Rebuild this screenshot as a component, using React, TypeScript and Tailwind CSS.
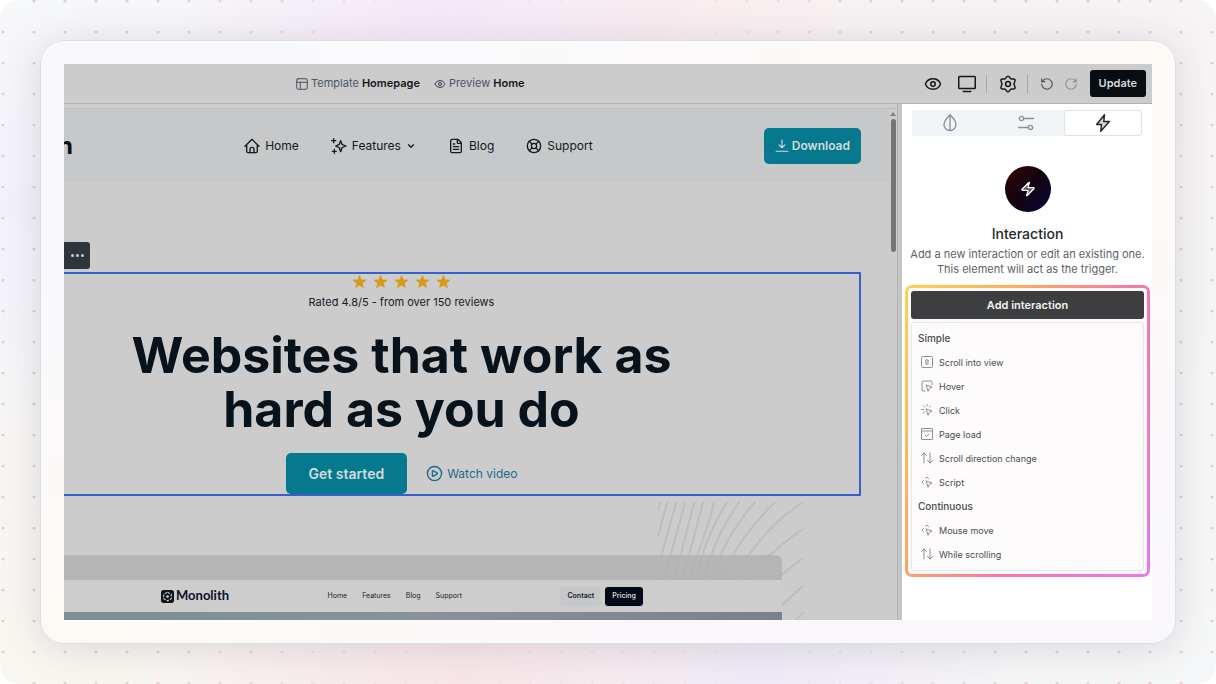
import type { ReactNode } from "react";
import { ChevronDown, CirclePlay, Eye, FileText, LifeBuoy, PanelsTopLeft, RotateCcw, RotateCw, Zap } from "lucide-react";

type IconProps = { className?: string; width?: number; children: ReactNode };

function Icon({ className = "size-4", width = 2, children }: IconProps) {
  return (
    <svg viewBox="0 0 24 24" fill="none" stroke="currentColor" strokeWidth={width} strokeLinecap="round" strokeLinejoin="round" className={className} aria-hidden="true">
      {children}
    </svg>
  );
}

const HomeIcon = () => (
  <Icon>
    <path d="M4 11v9a2 2 0 0 0 2 2h12a2 2 0 0 0 2-2v-9" />
    <path d="M1.500 12.500 12 2l10.500 10.500" />
    <path d="M9 22v-5a3 3 0 0 1 6 0v5" />
  </Icon>
);

const SparkIcon = () => (
  <Icon>
    <path d="M14.500 4l2 5.500 6 2.500-6 2.500-2 6-2-6-5.500-2.500 5.500-2.500z" />
    <path d="M4 1v6M1 4h6M5 17v6M2 20h6" />
  </Icon>
);

const GearIcon = () => (
  <Icon className="size-[18px]">
    <path d="M12 1.500c2 0 2.500 2.800 4 3.600s4.300-.600 5.300 1.200-1.300 3.800-1.300 5.700 2.300 3.900 1.300 5.700-3.800.400-5.300 1.200-2 3.600-4 3.600-2.500-2.800-4-3.600-4.300.600-5.300-1.200S4 13.900 4 12 1.700 8.100 2.700 6.300s3.800-.400 5.300-1.200 2-3.600 4-3.600z" />
    <circle cx="12" cy="12" r="3.200" />
  </Icon>
);

const pointer = "M11 10l11 4-5 2.500-2.500 5.500z";

const icons: Record<string, ReactNode> = {
  view: (
    <>
      <rect x="1" y="1" width="22" height="22" rx="2" />
      <path d="M9 9.500l3-3 3 3zM9 14.500l3 3 3-3z" />
    </>
  ),
  hover: (
    <>
      <path d="M8 22H4a2 2 0 0 1-2-2V4a2 2 0 0 1 2-2h16a2 2 0 0 1 2 2v5" />
      <path d={pointer} />
    </>
  ),
  click: (
    <>
      <path d="M12 1v3M5 4l2 2M1 11h4M4 19l3-3M19 4l-2 2" />
      <path d={pointer} />
    </>
  ),
  load: (
    <>
      <rect x="1" y="1" width="22" height="22" rx="1" />
      <path d="M1 6h22M8 14l3 3 5-5" />
    </>
  ),
  arrows: <path d="M6 22V2M1 7l5-5 5 5M18 2v20M13 17l5 5 5-5" />,
  move: (
    <>
      <path d="M9 5l3-3 3 3M5 9l-3 3 3 3" />
      <path d={pointer} />
    </>
  ),
};

const groups = [
  {
    title: "Simple",
    items: [
      ["view", "Scroll into view"],
      ["hover", "Hover"],
      ["click", "Click"],
      ["load", "Page load"],
      ["arrows", "Scroll direction change"],
      ["move", "Script"],
    ],
  },
  {
    title: "Continuous",
    items: [
      ["move", "Mouse move"],
      ["arrows", "While scrolling"],
    ],
  },
];

function TopBar() {
  return (
    <header className="flex h-10 shrink-0 items-center border-b border-[#b0b2b4] bg-[#cccccc] pr-1.5 text-[#14181c]">
      <div className="flex flex-1 items-center justify-center gap-3.5 pr-[168px] text-[11px]">
        <button className="flex items-center gap-0.5 text-[#4b5563]">
          <PanelsTopLeft className="size-3.5 text-[#374151]" strokeWidth={1.5} />
          <span>Template <b className="font-semibold text-[#14181c]">Homepage</b></span>
        </button>
        <button className="flex items-center gap-[3px] text-[#4b5563]">
          <Eye className="size-3 text-[#374151]" />
          <span>Preview <b className="font-semibold text-[#14181c]">Home</b></span>
        </button>
      </div>
      <div className="flex items-center">
        <button aria-label="Preview"><Eye className="size-[18px]" /></button>
        <button aria-label="Screen size" className="ml-4">
          <Icon className="size-[18px]">
            <rect x="1" y="2" width="22" height="16" rx="1" />
            <path d="M7 22h10" />
          </Icon>
        </button>
        <span className="mr-3 ml-2.5 h-[18px] w-px bg-[#a3a5a8]" />
        <button aria-label="Settings"><GearIcon /></button>
        <span className="mr-3 ml-2.5 h-[18px] w-px bg-[#a3a5a8]" />
        <button aria-label="Undo" className="text-[#4b5055]"><RotateCcw className="size-3.5" /></button>
        <button aria-label="Redo" className="ml-2.5 text-[#8e9194]"><RotateCw className="size-3.5" /></button>
        <button className="ml-3 h-[27px] rounded-[3px] bg-[#080d12] px-[9px] text-[11px] font-semibold text-[#d8d8d8]">Update</button>
      </div>
    </header>
  );
}

function SiteNav() {
  return (
    <nav className="flex h-[74px] items-center justify-between border-t border-[#bbbdbf] bg-[#c7c8c9] pr-7 text-[12px] text-[#111a22]">
      <span className="-ml-1.5 text-[24px] font-bold text-[#081117]">n</span>
      <div className="flex items-center gap-8">
        <a href="#" className="flex items-center gap-[5px]"><HomeIcon />Home</a>
        <a href="#" className="flex items-center gap-[5px]"><SparkIcon />Features<ChevronDown className="size-2.5" strokeWidth={3} /></a>
        <a href="#" className="flex items-center gap-[5px]"><FileText className="size-4" />Blog</a>
        <a href="#" className="flex items-center gap-[5px]"><LifeBuoy className="size-4" />Support</a>
      </div>
      <button className="flex h-9 items-center gap-[3px] rounded-[5px] bg-[#06798f] px-[11px] font-semibold text-[#d3dadb]">
        <Icon className="size-3.5">
          <path d="M12 2v13M7 10l5 5 5-5M2 21h20" />
        </Icon>
        Download
      </button>
    </nav>
  );
}

function Hero() {
  return (
    <section className="mr-7 flex h-[224px] flex-col items-center border-2 border-l-0 border-[#3560cf] pr-[120px]">
      <div className="flex gap-1.5 text-[#d79a1b]" role="img" aria-label="5 stars">
        {[1, 2, 3, 4, 5].map((n) => (
          <svg key={n} viewBox="0 0 24 24" fill="currentColor" className="size-[15px]">
            <path d="M12 1l3.200 7.600 8.300.700-6.300 5.400 1.900 8.100L12 18.500l-7.100 4.300 1.900-8.100L.500 9.300l8.300-.700z" />
          </svg>
        ))}
      </div>
      <p className="mt-[3px] text-[11px] leading-5 text-[#16202a]">Rated 4.8/5 - from over 150 reviews</p>
      <h1 className="mt-4 text-center text-[50px] leading-[54px] font-bold text-[#07121a]">
        Websites that work as
        <br />
        hard as you do
      </h1>
      <div className="mt-[17px] flex items-center gap-[19px]">
        <button className="h-[41px] rounded-[5px] bg-[#06798f] px-[23px] text-[14px] font-semibold text-[#d3dadb]">Get started</button>
        <a href="#" className="flex items-center gap-1 text-[12px] text-[#1b6a8c]"><CirclePlay className="size-[17px]" />Watch video</a>
      </div>
    </section>
  );
}

function Waves() {
  const lines = [
    "M3 3 1 10",
    "M10 3 1 36",
    "M19 3 2 64",
    "M28 3 4 90",
    "M37 3 12 100",
    "M46 3 20 100",
    "M57 2C52 30 35 60 28 100",
    "M70 2C50 35 42 60 35 100",
    "M82 2C60 35 50 60 43 100",
    "M98 2C70 35 56 65 52 100",
    "M118 2C85 35 66 65 60 100",
    "M146 2C110 25 80 65 68 100",
    "M146 29C115 50 90 75 76 100",
    "M146 58C128 72 110 85 96 104",
    "M146 86C134 96 122 108 112 118",
    "M146 113 124 135",
  ];
  return (
    <svg viewBox="0 0 148 120" fill="none" stroke="#b9bfc2" strokeWidth="2" strokeLinecap="round" className="absolute top-1 right-[84px] h-[120px] w-[148px]" aria-hidden="true">
      {lines.map((d) => (
        <path key={d} d={d} />
      ))}
    </svg>
  );
}

function SitePreview() {
  return (
    <div className="relative flex-1 overflow-hidden pt-[59px]">
      <Waves />
      <div className="relative mr-[107px] overflow-hidden rounded-tr-md">
        <div className="h-[25px] bg-[#b0b0b0]/80" />
        <div className="flex h-8 items-center bg-[#cdcdcd] pr-[139px] pl-[97px] text-[7px] text-[#18202c]">
          <span className="flex items-center gap-0.5 font-['Lato',sans-serif] text-[13px] font-bold text-[#0c141e]">
            <svg viewBox="0 0 24 24" className="size-[13px]" aria-hidden="true">
              <rect width="24" height="24" rx="5" fill="#0c141e" />
              <path d="M12 4l7 4v8l-7 4-7-4V8z" fill="none" stroke="#cdcdcd" strokeWidth="2" strokeDasharray="5 2" />
              <circle cx="12" cy="12" r="2.500" fill="#cdcdcd" />
            </svg>
            Monolith
          </span>
          <div className="flex flex-1 justify-center gap-[15px]">
            <a href="#">Home</a>
            <a href="#">Features</a>
            <a href="#">Blog</a>
            <a href="#">Support</a>
          </div>
          <button className="h-[19px] rounded-[3px] bg-[#c6c7ca] px-[7px] font-semibold">Contact</button>
          <button className="ml-1 h-[19px] rounded-[3px] bg-[#030a18] px-[7px] font-semibold text-[#d5d5d5]">Pricing</button>
        </div>
        <div className="h-2 bg-linear-to-r from-[#7d8e95] via-[#87929a] to-[#77828d]" />
      </div>
    </div>
  );
}

function Canvas() {
  return (
    <main className="flex min-w-0 flex-1 border-r border-[#b2b5b8] bg-[#cccccc] pt-1">
      <div className="flex min-w-0 flex-1 flex-col overflow-hidden">
        <SiteNav />
        <div className="flex h-[90px] items-end pb-[3px]">
          <button aria-label="More" className="flex h-[27px] w-[26px] items-center justify-center gap-0.5 rounded-r-[3px] bg-[#2f353c]">
            <i className="size-[3px] rounded-full bg-[#cccccc]" />
            <i className="size-[3px] rounded-full bg-[#cccccc]" />
            <i className="size-[3px] rounded-full bg-[#cccccc]" />
          </button>
        </div>
        <Hero />
        <SitePreview />
      </div>
      <div className="flex w-2 flex-col items-center gap-[3px] border-t border-[#bbbdbf] pt-[3px]">
        <svg viewBox="0 0 6 4" className="h-1 w-1.5" fill="#808284" aria-hidden="true"><path d="M3 0l3 4H0z" /></svg>
        <span className="h-[133px] w-[5px] rounded-full bg-[#737577]" />
      </div>
    </main>
  );
}

function Panel() {
  const tab = "flex flex-1 items-center justify-center rounded-[3px]";
  return (
    <aside className="w-[250px] shrink-0 bg-white pt-1.5 pr-0.5 pl-[3px] text-[#4a4d50]">
      <div className="mr-2 ml-[7px] flex h-[26px] rounded-[3px] bg-[#f1f4f6] text-[#8b9196]" role="tablist">
        <button role="tab" aria-label="Style" className={tab}>
          <Icon className="size-[18px]" width={1.8}><path d="M12 1C8 5 4 8.500 4 14c0 4.500 3.500 8 8 8s8-3.500 8-8c0-5.500-4-9-8-13zM12 1v21" /></Icon>
        </button>
        <button role="tab" aria-label="Settings" className={tab}>
          <Icon className="size-[18px]" width={1.8}>
            <circle cx="6" cy="6" r="2.800" />
            <circle cx="18" cy="18" r="2.800" />
            <path d="M9 6h13M2 18h13" />
          </Icon>
        </button>
        <button role="tab" aria-label="Interactions" aria-selected="true" className={`${tab} border border-[#dfe2e4] bg-white text-[#22262a]`}>
          <Icon className="size-[18px]"><path d="M14 1 3.500 14H10l-1 9L20.500 10H13z" fill="#d4d4d4" /></Icon>
        </button>
      </div>
      <div className="flex flex-col items-center pt-[30px] text-center">
        <span className="flex size-[46px] items-center justify-center rounded-full bg-linear-to-br from-[#380202] via-[#12030f] to-[#0a0040] text-white">
          <Zap className="size-4" fill="#6b5560" />
        </span>
        <h2 className="mt-3 text-[14px] leading-5 font-medium text-[#25282b]">Interaction</h2>
        <p className="mt-[3px] text-[11px] leading-[15px] text-[#5e6266]">
          Add a new interaction or edit an existing one.
          <br />
          This element will act as the trigger.
        </p>
      </div>
      <div className="mt-2 rounded-[7px] bg-[linear-gradient(115deg,#ffd24f,#ffab5e_30%,#f878a8_60%,#e57af0)] p-[3px]">
        <div className="rounded-[4px] bg-[#fbf8f9] p-[3px]">
          <button className="h-7 w-full rounded-[3px] bg-[#3c3e40] text-[11px] font-semibold text-[#f2f2f2]">Add interaction</button>
          <div className="mt-[3px] rounded-[3px] border border-[#e8e5e7] bg-[#fdfbfc] px-1.5 pt-[3px] pb-1">
            {groups.map((group) => (
              <section key={group.title}>
                <h3 className="text-[10px] leading-6 font-medium text-[#4a4d50]">{group.title}</h3>
                <ul>
                  {group.items.map(([icon, label]) => (
                    <li key={label}>
                      <button className="flex h-6 w-full items-center gap-1.5 pl-[3px] text-[9px]">
                        <Icon className="size-3 text-[#8b9196]">{icons[icon]}</Icon>
                        {label}
                      </button>
                    </li>
                  ))}
                </ul>
              </section>
            ))}
          </div>
        </div>
      </div>
    </aside>
  );
}

export default function App() {
  return (
    <div className="min-h-screen bg-white font-[Inter,sans-serif]">
      <div className="flex min-h-screen flex-col overflow-hidden rounded-[20px] bg-[radial-gradient(ellipse_at_36%_0%,#f4e9f8,transparent_25%),radial-gradient(ellipse_at_54%_0%,#f9ecee,transparent_25%),radial-gradient(ellipse_at_38%_100%,#f8e6ea,transparent_28%),radial-gradient(ellipse_at_62%_100%,#efebf7,transparent_25%),radial-gradient(circle_at_3px_1px,#e6ccd3_1px,transparent_2px),radial-gradient(ellipse_at_0%_30%,#f3f2fb,transparent_35%),radial-gradient(ellipse_at_0%_100%,#f9f7f1,transparent_40%),linear-gradient(135deg,#f7f9f9,#f6f2f3_50%,#f6f7f8)] bg-[size:auto,auto,auto,auto,31px_31px,auto,auto,auto] p-10">
        <div className="flex flex-1 flex-col rounded-3xl border border-[#d8e1e7] bg-[radial-gradient(ellipse_at_100%_0%,#fdf9f5,transparent_60%),radial-gradient(ellipse_at_0%_100%,#fdfaf5,transparent_45%),linear-gradient(#f9f9fd,#f9f7fb)] p-[23px] shadow-[0_4px_40px_rgba(60,50,60,0.15)]">
          <div className="flex flex-1 flex-col overflow-hidden">
            <TopBar />
            <div className="flex flex-1 bg-[#c3c5c7]">
              <Canvas />
              <div className="w-1" />
              <Panel />
            </div>
          </div>
        </div>
      </div>
    </div>
  );
}
